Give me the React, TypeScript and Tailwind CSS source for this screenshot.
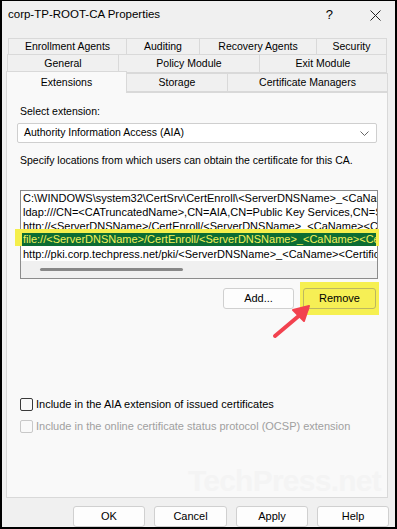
import React from "react";

const font = { fontFamily: '"Liberation Sans", Arial, sans-serif' };

function Tab({ w, label, className = "" }: { w: string; label: string; className?: string }) {
  return (
    <div
      className={`${w} -ml-px flex items-center justify-center border border-[#d9d9d9] bg-[#f0f0f0] text-[10.5px] text-black ${className}`}
    >
      {label}
    </div>
  );
}

function Btn({ label, className = "" }: { label: string; className?: string }) {
  return (
    <div
      className={`flex h-[21px] items-center justify-center rounded-[3px] border border-[#d0d0d0] bg-[#fdfdfd] text-[11px] text-black ${className}`}
    >
      {label}
    </div>
  );
}

const rows = [
  "C:\\WINDOWS\\system32\\CertSrv\\CertEnroll\\<ServerDNSName>_<CaName><CertificateName>.crt",
  "ldap:///CN=<CATruncatedName>,CN=AIA,CN=Public Key Services,CN=Services,<ConfigurationContainer>",
  "http://<ServerDNSName>/CertEnroll/<ServerDNSName>_<CaName><CertificateName>.crt",
  "file://<ServerDNSName>/CertEnroll/<ServerDNSName>_<CaName><CertificateName>.crt",
  "http://pki.corp.techpress.net/pki/<ServerDNSName>_<CaName><CertificateName>.crt",
];

export default function App() {
  return (
    <div
      style={font}
      className="relative flex h-[529px] w-[397px] flex-col overflow-hidden border-x-2 border-b-2 border-t border-black bg-[#f0f0f0] text-black"
    >
      {/* title bar */}
      <div className="flex h-[28px] items-center pl-[6px]">
        <span className="text-[11.5px]">corp-TP-ROOT-CA Properties</span>
        <span className="ml-auto mr-[37px] text-[13px]">?</span>
        <svg width="11" height="11" viewBox="0 0 11 11" className="mr-[14px]">
          <path d="M0.5 0.5 L10.5 10.5 M10.5 0.5 L0.5 10.5" stroke="#222" strokeWidth="1" />
        </svg>
      </div>

      {/* tabs */}
      <div className="mt-[9px] flex h-[17px] pl-[7px]">
        <Tab w="w-[119px]" label="Enrollment Agents" />
        <Tab w="w-[74px]" label="Auditing" />
        <Tab w="w-[118px]" label="Recovery Agents" />
        <Tab w="w-[71px]" label="Security" />
      </div>
      <div className="-mt-px flex h-[19px] pl-[6px]">
        <Tab w="w-[112px]" label="General" />
        <Tab w="w-[142px]" label="Policy Module" />
        <Tab w="w-[128px]" label="Exit Module" />
      </div>
      <div className="relative z-10 -mt-[2px] flex h-[22px] items-end pl-[4px]">
        <div className="flex h-[22px] w-[121px] items-start justify-center border border-b-0 border-[#d9d9d9] bg-[#f9f9f9] pt-[3px] text-[10.5px]">
          Extensions
        </div>
        <Tab w="w-[102px] h-[19px] mb-px" label="Storage" />
        <Tab w="w-[161px] h-[19px] mb-px" label="Certificate Managers" />
      </div>

      {/* panel */}
      <div className="relative -mt-px ml-[4px] flex h-[406px] w-[382px] flex-col border border-[#d9d9d9] bg-[#f9f9f9]">
        <div className="ml-[13px] mt-[12px] text-[10.5px] leading-[13px]">Select extension:</div>
        <div className="ml-[10px] mt-[5px] flex h-[20px] w-[360px] items-center rounded-[2px] border border-[#cfcfcf] bg-white pl-[6px] pr-[6px] text-[10.5px]">
          <span>Authority Information Access (AIA)</span>
          <svg width="9" height="5" viewBox="0 0 9 5" className="ml-auto mr-[1px]">
            <path d="M0.5 0.5 L4.5 4.5 L8.5 0.5" stroke="#555" fill="none" strokeWidth="0.9" />
          </svg>
        </div>
        <div className="ml-[13px] mt-[11px] text-[10.5px] leading-[13px]">
          Specify locations from which users can obtain the certificate for this CA.
        </div>

        {/* list */}
        <div className="relative ml-[13px] mt-[23px] flex h-[89px] w-[358px] flex-col border border-[#8c8c8c] bg-white">
          <div className="flex flex-col">
            {rows.map((r, i) =>
              i === 3 ? (
                <div key={i} className="relative h-[14px]">
                  <div className="absolute -left-[6px] -right-[2px] -top-[4px] h-[17px] bg-[#f5ef4c]" />
                  <div className="relative ml-px mr-px h-[13px] overflow-hidden whitespace-nowrap bg-[#0c6c33] pl-px text-[11px] leading-[13px] text-[#f3f15a]">
                    {r}
                  </div>
                </div>
              ) : (
                <div
                  key={i}
                  className="h-[14px] overflow-hidden whitespace-nowrap pl-[2px] pr-px text-[11px] leading-[14px]"
                >
                  {r}
                </div>
              )
            )}
          </div>
          <div className="mt-auto flex h-[17px] items-center bg-[#f0f0f0] pl-[19px]">
            <div className="h-[3px] w-[143px] rounded-full bg-[#888888]" />
          </div>
        </div>

        {/* add / remove */}
        <div className="mr-[8px] mt-[9px] flex justify-end gap-[6px]">
          <Btn label="Add..." className="w-[71px]" />
          <div className="-my-[6px] flex items-center bg-[#f6f051] px-[3px]">
            <div className="flex h-[21px] w-[73px] items-center justify-center rounded-[3px] border border-[#bdb760] bg-[#f6ef55] text-[11px]">
              Remove
            </div>
          </div>
        </div>

        {/* checkboxes */}
        <div className="ml-[13px] mt-[88px] flex items-center gap-[3px] text-[11px] leading-[14px]">
          <div className="h-[13px] w-[13px] rounded-[2px] border border-[#3a3a3a] bg-[#f9f9f9]" />
          <span>Include in the AIA extension of issued certificates</span>
        </div>
        <div className="ml-[13px] mt-[8px] flex items-center gap-[3px] text-[11px] leading-[14px] text-[#a0a0a0]">
          <div className="h-[13px] w-[13px] rounded-[2px] border border-[#c8c8c8] bg-[#f9f9f9]" />
          <span>Include in the online certificate status protocol (OCSP) extension</span>
        </div>

        {/* watermark */}
        <div className="pointer-events-none absolute bottom-[1px] right-[6px] text-[30px] font-bold leading-none tracking-tight text-[#f4f4f4]">
          TechPress.net
        </div>

        {/* arrow */}
        <svg
          className="absolute left-[262px] top-[207px]"
          width="44"
          height="40"
          viewBox="0 0 44 40"
        >
          <path d="M6 36 L38 9" stroke="#f2424f" strokeWidth="4" strokeLinecap="round" />
          <path d="M40 6 L24 10 L35 21 Z" fill="#f2424f" stroke="#f2424f" strokeWidth="2" strokeLinejoin="round" />
        </svg>
      </div>

      {/* bottom buttons */}
      <div className="mr-[6px] mt-[8px] flex justify-end gap-[9px]">
        <Btn label="OK" className="w-[72px]" />
        <Btn label="Cancel" className="w-[73px] border-[#1a6fc9]" />
        <Btn label="Apply" className="w-[72px]" />
        <Btn label="Help" className="w-[72px]" />
      </div>
    </div>
  );
}
